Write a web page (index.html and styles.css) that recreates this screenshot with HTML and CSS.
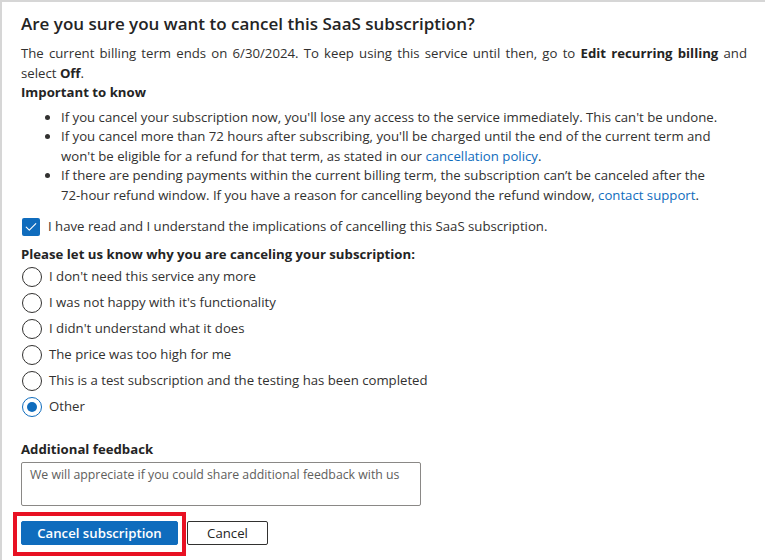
FILE: index.html
```html
<!DOCTYPE html>
<html lang="en">
<head>
<meta charset="utf-8">
<title>Cancel SaaS subscription</title>
<link rel="stylesheet" href="styles.css">
</head>
<body>
<div class="panel">
  <h1 class="title">Are you sure you want to cancel this SaaS subscription?</h1>
  <p class="lead">The current billing term ends on 6/30/2024. To keep using this service until then, go to <b>Edit recurring billing</b><span> and </span>select <b>Off</b>.</p>
  <div class="subhead">Important to know</div>
  <ul class="notes">
    <li>If you cancel your subscription now, you'll lose any access to the service immediately. This can't be undone.</li>
    <li>If you cancel more than 72 hours after subscribing, you'll be charged until the end of the current term and <span>won't be eligible for a refund for that term, as stated in our </span><a class="link" href="#">cancellation policy</a>.</li>
    <li>If there are pending payments within the current billing term, the subscription can’t be canceled after the <span class="nowrap">72-hour</span> refund window. If you have a reason for cancelling beyond the refund window, <a class="link" href="#">contact support</a>.</li>
  </ul>

  <label class="check-row">
    <span class="checkbox">
      <svg width="12" height="10" viewBox="0 0 12 10"><path d="M1.2 5.2 L4.3 8.2 L10.8 1.6" fill="none" stroke="#fff" stroke-width="1.1" stroke-linecap="round" stroke-linejoin="round"/></svg>
    </span>
    <span>I have read and I understand the implications of cancelling this SaaS subscription.</span>
  </label>

  <div class="subhead reasons-head">Please let us know why you are canceling your subscription:</div>
  <div class="radios">
    <div class="radio-row"><span class="radio"></span><span>I don't need this service any more</span></div>
    <div class="radio-row"><span class="radio"></span><span>I was not happy with it's functionality</span></div>
    <div class="radio-row"><span class="radio"></span><span>I didn't understand what it does</span></div>
    <div class="radio-row"><span class="radio"></span><span>The price was too high for me</span></div>
    <div class="radio-row"><span class="radio"></span><span>This is a test subscription and the testing has been completed</span></div>
    <div class="radio-row"><span class="radio checked"></span><span>Other</span></div>
  </div>

  <div class="subhead feedback-head">Additional feedback</div>
  <div class="feedback">We will appreciate if you could share additional feedback with us</div>

  <div class="actions">
    <div class="primary-wrap">
      <button class="btn primary">Cancel subscription</button>
      <span class="highlight"></span>
    </div>
    <button class="btn secondary">Cancel</button>
  </div>
</div>
</body>
</html>
```
FILE: styles.css
```css
* { box-sizing: border-box; }
html, body { margin: 0; padding: 0; background: #fff; }
body {
  font-family: "Open Sans", "Noto Sans", sans-serif;
  font-size: 13.2px;
  line-height: 19.5px;
  color: #323130;
  width: 765px;
  height: 560px;
  overflow: hidden;
}
.panel {
  border-left: 2px solid #d6d6d6;
  border-top: 2px solid #d6d6d6;
  padding: 10px 18px 0 19px;
  height: 560px;
}
.title {
  margin: 0 0 7px;
  font-size: 17px;
  line-height: 24px;
  font-weight: 600;
  color: #242424;
}
.lead {
  margin: 0;
  line-height: 20px;
  text-align: justify;
}
.lead b, .subhead { font-weight: 700; color: #242424; }
.subhead { margin: 0; }
.notes {
  margin: 5px 0 0;
  padding-left: 40px;
}
.notes li { padding-right: 4px; }
.nowrap { white-space: nowrap; }
.link { color: #0f6cbd; text-decoration: none; }
.check-row {
  display: flex;
  align-items: center;
  gap: 8px;
  margin-top: 12px;
  padding-left: 1px;
}
.checkbox {
  width: 18px;
  height: 18px;
  border-radius: 2px;
  background: #0f6cbd;
  display: flex;
  align-items: center;
  justify-content: center;
  flex: none;
}
.reasons-head { margin-top: 8px; }
.radios {
  display: flex;
  flex-direction: column;
  gap: 6px;
  margin-top: 3px;
}
.radio-row {
  display: flex;
  align-items: center;
  gap: 7px;
  height: 20px;
  padding-left: 1px;
}
.radio {
  width: 20px;
  height: 20px;
  border-radius: 50%;
  border: 1.5px solid #323130;
  flex: none;
  display: flex;
  align-items: center;
  justify-content: center;
}
.radio.checked { border-color: #0f6cbd; }
.radio.checked::after {
  content: "";
  width: 10px;
  height: 10px;
  border-radius: 50%;
  background: #0f6cbd;
}
.feedback-head { margin-top: 23px; }
.feedback {
  margin-top: 2px;
  width: 400px;
  height: 44px;
  border: 1px solid #8a8886;
  border-radius: 2px;
  padding: 2px 4px 2px 8px;
  font-size: 12.3px;
  color: #605e5c;
  white-space: nowrap;
}
.actions {
  display: flex;
  align-items: center;
  gap: 9px;
  margin-top: 15px;
}
.primary-wrap { position: relative; display: flex; }
.btn {
  font-family: "Open Sans", "Noto Sans", sans-serif;
  font-size: 13.2px;
  font-weight: 600;
  height: 24px;
  border-radius: 2px;
  padding: 0 12px;
  cursor: pointer;
}
.primary {
  width: 157px;
  background: #0f6cbd;
  color: #fff;
  border: 1px solid #0f6cbd;
}
.secondary {
  width: 81px;
  height: 24px;
  background: #fff;
  color: #242424;
  border: 1px solid #323130;
  font-weight: 400;
}
.highlight {
  position: absolute;
  left: -8px;
  top: -9px;
  right: -8px;
  bottom: -11px;
  border: 4px solid #e81123;
  pointer-events: none;
}
```
